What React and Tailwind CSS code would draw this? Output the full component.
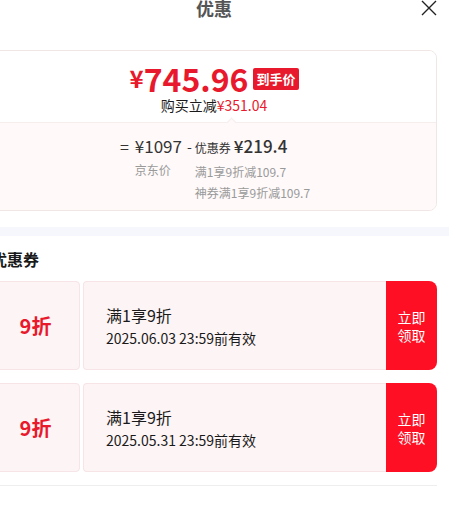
import React from "react";

const font = "font-['Noto_Sans_CJK_SC','Noto_Sans',sans-serif]";

function Coupon({ date }) {
  return (
    <div className="flex h-[89px]">
      <div className="relative flex w-[89px] items-center justify-center rounded-l-[8px] rounded-r-[4px] border border-[#f6e4e6] bg-[#fdf4f5]">
        <span className="text-[20px] font-bold leading-none text-[#e8192c]">9折</span>
      </div>
      <div className="ml-[3px] flex flex-1 flex-col justify-center rounded-l-[4px] border border-r-0 border-[#f6e4e6] bg-[#fdf4f5] pl-[22px]">
        <div className="text-[16px] leading-[22px] text-[#1a1a1a]">满1享9折</div>
        <div className="mt-[2px] text-[14px] leading-[20px] text-[#1a1a1a]">{date} 23:59前有效</div>
      </div>
      <div className="flex w-[51px] flex-col items-center justify-center rounded-r-[8px] bg-[#ff0f23] text-[14px] leading-[18px] text-white">
        <span>立即</span>
        <span>领取</span>
      </div>
    </div>
  );
}

export default function App() {
  return (
    <div className={`-ml-[21px] -mt-[14px] w-[470px] bg-white ${font}`}>
      <div className="relative flex h-[44px] items-center justify-center">
        <span className="text-[18px] font-bold text-[#555]">优惠</span>
        <svg className="absolute right-[12px] top-[14px]" width="16" height="16" viewBox="0 0 16 16" fill="none" stroke="#222" strokeWidth="1.4">
          <path d="M1 1L15 15M15 1L1 15" />
        </svg>
      </div>

      <div className="px-[12px]">
        <div className="mt-[20px] overflow-hidden rounded-[8px] border border-[#f0e6e6]">
          <div className="relative flex h-[71px] flex-col items-center bg-white pt-[8px]">
            <div className="flex items-center">
              <span className="text-[24px] font-bold leading-none text-[#e8192c]">¥</span>
              <span className="text-[32px] font-bold leading-[38px] text-[#e8192c]">745.96</span>
              <span className="ml-[5px] mt-[2px] rounded-[2px] bg-[#e8192c] px-[3px] text-[13px] font-bold leading-[22px] text-white">到手价</span>
            </div>
            <div className="-mt-[2px] text-[14px] leading-[20px] text-[#1a1a1a]">
              购买立减<span className="text-[#e8192c]">¥351.04</span>
            </div>
          </div>
          <div className="relative border-t border-[#f6eded] bg-[#fff9f9] pb-[7px] pt-[11px]">
            <div className="absolute -top-[4px] left-[236px] h-[7px] w-[7px] rotate-45 border-l border-t border-[#f6eded] bg-[#fff9f9]" />
            <div className="flex justify-center pl-[2px]">
              <span className="mr-[6px] text-[16px] leading-[24px] text-[#333]">=</span>
              <div className="flex flex-col">
                <span className="text-[17px] leading-[24px] text-[#333]">¥1097</span>
                <span className="mt-[1px] text-[12px] leading-[21px] text-[#999]">京东价</span>
              </div>
              <span className="ml-[5px] mr-[3px] text-[14px] leading-[24px] text-[#333]">-</span>
              <div className="flex flex-col">
                <span className="leading-[24px] text-[#333]">
                  <span className="text-[12px]">优惠券</span>
                  <span className="ml-[3px] text-[17px] font-medium">¥219.4</span>
                </span>
                <span className="mt-[1px] text-[12px] leading-[21px] text-[#999]">满1享9折减109.7</span>
                <span className="text-[12px] leading-[21px] text-[#999]">神券满1享9折减109.7</span>
              </div>
            </div>
          </div>
        </div>
      </div>

      <div className="mt-[16px] h-[9px] bg-[#f5f7fc]" />

      <div className="px-[12px]">
        <div className="mt-[11px] text-[16px] font-bold leading-[24px] text-[#1a1a1a]">优惠券</div>
        <div className="mt-[10px] flex flex-col gap-[13px]">
          <Coupon date="2025.06.03" />
          <Coupon date="2025.05.31" />
        </div>
        <div className="mt-[13px] h-px bg-[#eeeeee]" />
        <div className="h-[36px]" />
      </div>
    </div>
  );
}
